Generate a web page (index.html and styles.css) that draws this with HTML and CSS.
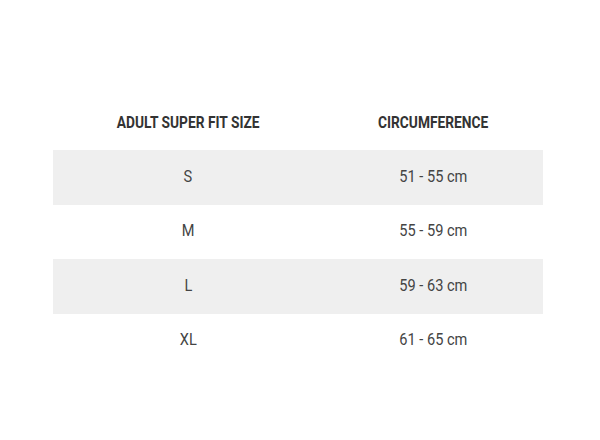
FILE: index.html
```html
<!DOCTYPE html>
<html>
<head>
<meta charset="utf-8">
<link rel="stylesheet" href="styles.css">
</head>
<body>
<div class="page">
  <table class="size-table">
    <thead>
      <tr><th><span class="cond">ADULT SUPER FIT SIZE</span></th><th><span class="cond">CIRCUMFERENCE</span></th></tr>
    </thead>
    <tbody>
      <tr class="shaded"><td><span class="cond">S</span></td><td><span class="cond">51 - 55 cm</span></td></tr>
      <tr><td><span class="cond">M</span></td><td><span class="cond">55 - 59 cm</span></td></tr>
      <tr class="shaded"><td><span class="cond">L</span></td><td><span class="cond">59 - 63 cm</span></td></tr>
      <tr><td><span class="cond">XL</span></td><td><span class="cond">61 - 65 cm</span></td></tr>
    </tbody>
  </table>
</div>
</body>
</html>
```
FILE: styles.css
```css
html, body {
  margin: 0;
  padding: 0;
  background: #ffffff;
}
.page {
  width: 600px;
  height: 440px;
  padding: 100px 0 0 53px;
  box-sizing: border-box;
}
.size-table {
  width: 490px;
  border-collapse: collapse;
  table-layout: fixed;
  font-family: "Roboto", "Liberation Sans", sans-serif;
  color: #444;
}
.size-table th,
.size-table td {
  width: 50%;
  padding: 0 0 0 25px;
  text-align: center;
  box-sizing: border-box;
  white-space: nowrap;
}
.cond {
  display: inline-block;
}
.size-table th {
  height: 50px;
  padding-bottom: 6px;
  font-size: 17px;
  font-weight: 700;
  color: #333;
}
.size-table th .cond {
  transform: scaleX(0.81);
}
.size-table td {
  height: 54.5px;
  padding-bottom: 2px;
  font-size: 16px;
}
.size-table td .cond {
  transform: scaleX(0.91);
}
.shaded {
  background: #efefef;
}
```
